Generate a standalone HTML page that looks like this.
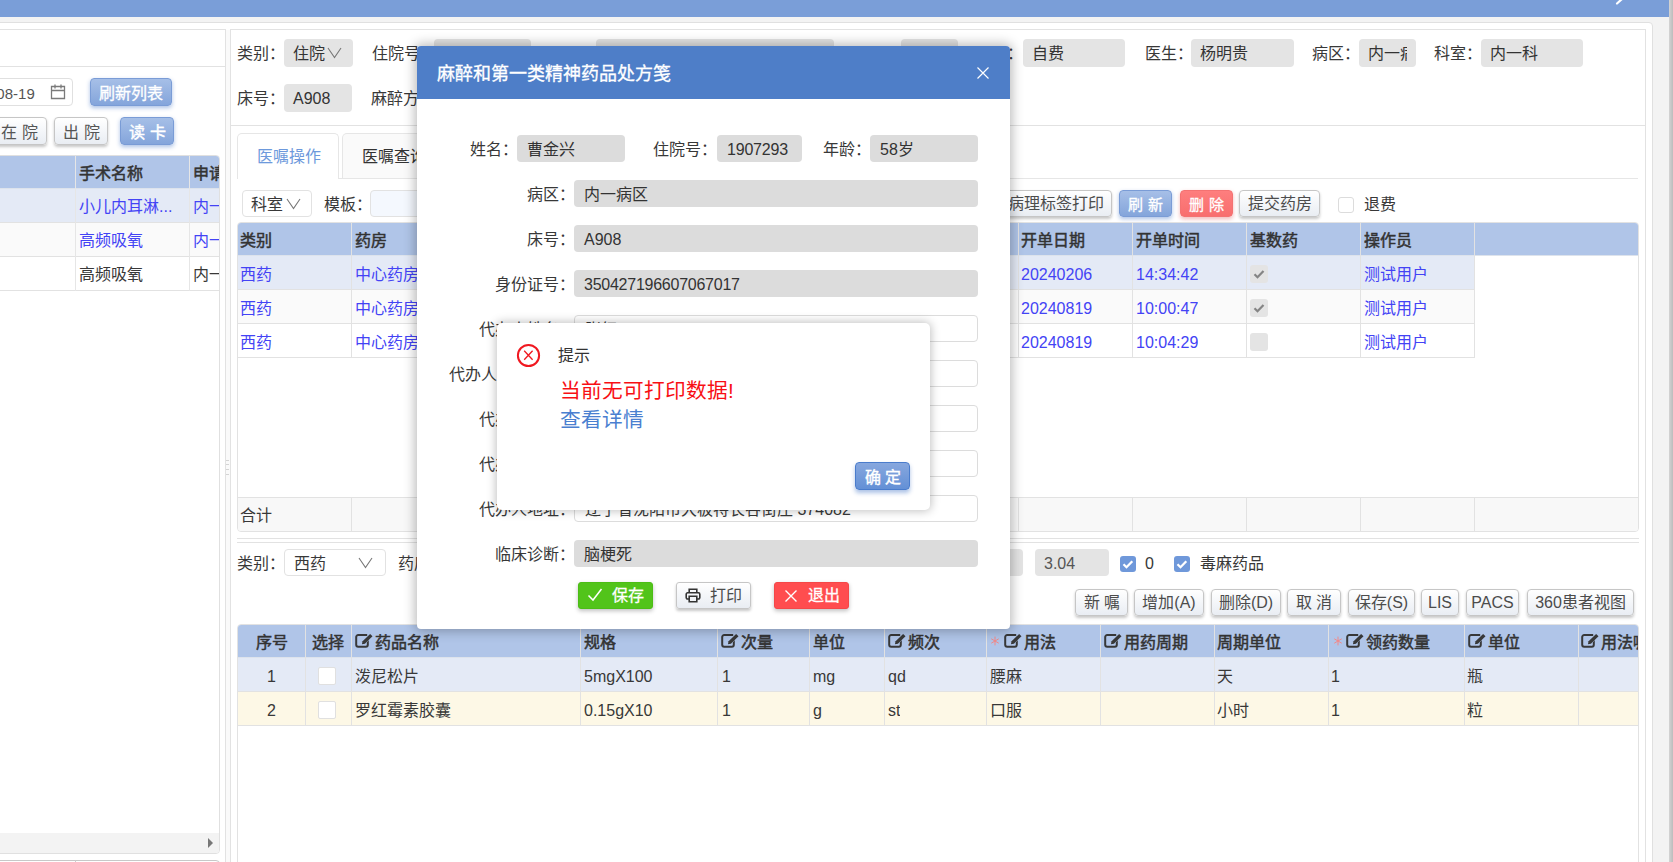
<!DOCTYPE html>
<html lang="zh-CN">
<head>
<meta charset="utf-8">
<style>
*{box-sizing:border-box;margin:0;padding:0}
html,body{width:1673px;height:862px;overflow:hidden;background:#f3f3f3;font-family:"Liberation Sans",sans-serif;font-size:16px;color:#383838}
.a{position:absolute}
.t{position:absolute;white-space:nowrap;line-height:1}
.gb{position:absolute;background:#e4e4e4;border-radius:4px;white-space:nowrap;overflow:hidden;padding-left:9px;color:#333}
.wb{position:absolute;background:#fff;border:1px solid #dcdcdc;border-radius:4px;white-space:nowrap;overflow:hidden}
.btn{position:absolute;border:1px solid #c6c6c6;border-radius:4px;background:linear-gradient(#fff,#e9edf3);box-shadow:0 2px 3px rgba(0,0,0,.22);text-align:center;white-space:nowrap;color:#4c4c4c;font-size:15px}
.bb{position:absolute;border:1px solid #7a9cd6;border-radius:4px;background:linear-gradient(#a6bfe7,#84a5db);box-shadow:0 2px 4px rgba(70,120,200,.45);text-align:center;white-space:nowrap;color:#fff;font-size:15px;padding-top:1px;-webkit-text-stroke:0.3px #fff}
.br{position:absolute;border:1px solid #f47272;border-radius:4px;background:linear-gradient(#fe7e7e,#f86e6e);box-shadow:0 2px 4px rgba(220,80,80,.4);text-align:center;white-space:nowrap;color:#fff;font-size:15px;padding-top:1px;-webkit-text-stroke:0.3px #fff}
.hl{position:absolute;height:1px;background:#e2e2e2}
.vl{position:absolute;width:1px;background:#e2e2e2}
.th{position:absolute;background:#b0c5e8}
.hd{position:absolute;white-space:nowrap;-webkit-text-stroke:0.5px #333;color:#333;overflow:hidden;padding-top:1px}
.cell{position:absolute;white-space:nowrap;overflow:hidden;padding-top:2px}
.lk{color:#4343f5}
</style>
</head>
<body>
<!-- top bar -->
<div class="a" style="left:0;top:0;width:1669px;height:17px;background:#7a9ed8"></div>
<svg class="a" style="left:1614px;top:-3px" width="10" height="8" viewBox="0 0 10 8"><path d="M3 6.5L7.5 2.5" stroke="#fff" stroke-width="2.2" stroke-linecap="round"/></svg>
<div class="a" style="left:1669px;top:0;width:4px;height:862px;background:linear-gradient(90deg,#d4d4d4,#bcbcbc)"></div>

<!-- outer panel -->
<div class="a" style="left:-10px;top:22px;width:1663px;height:900px;background:#fff;border:1px solid #e0e0e0;border-radius:4px"></div>

<!-- LEFT PANEL -->
<div class="a" style="left:-10px;top:29px;width:236px;height:900px;border:1px solid #e2e2e2;background:#fff"></div>
<div class="hl" style="left:0;top:66px;width:225px"></div>
<div class="wb" style="left:-40px;top:78px;width:113px;height:28px;border-color:#e0e0e0"></div>
<div class="t" style="left:-42px;top:86px;color:#555;font-size:15px">2024-08-19</div>
<svg class="a" style="left:50px;top:83px" width="16" height="17" viewBox="0 0 16 17"><path d="M1.5 3.5h13v12h-13zM1.5 7.5h13M5 1.5v4M11 1.5v4" fill="none" stroke="#7a7a7a" stroke-width="1.3"/></svg>
<div class="bb" style="left:90px;top:78px;width:82px;height:28px;line-height:28px;font-size:16px">刷新列表</div>
<div class="btn" style="left:-8px;top:117px;width:55px;height:28px;line-height:27px;padding-top:1px;font-size:16px;letter-spacing:5px;padding-left:5px;color:#555">在院</div>
<div class="btn" style="left:54px;top:117px;width:54px;height:28px;line-height:27px;padding-top:1px;font-size:16px;letter-spacing:5px;padding-left:5px;color:#555">出院</div>
<div class="bb" style="left:120px;top:117px;width:54px;height:28px;line-height:27px;font-size:16px;letter-spacing:5px;padding-left:5px;-webkit-text-stroke:0.45px #fff">读卡</div>

<!-- left table -->
<div class="a" style="left:-10px;top:155px;width:230px;height:699px;border:1px solid #e0e0e0;border-radius:0 4px 4px 0;overflow:hidden;background:#fff">
  <div class="th" style="left:0;top:0;width:230px;height:33px;border-bottom:1px solid #dde3ec"></div>
  <div class="a" style="left:0;top:33px;width:230px;height:34px;background:#e4eaf6;border-bottom:1px solid #e2e2e2"></div>
  <div class="a" style="left:0;top:67px;width:230px;height:34px;background:#fafafa;border-bottom:1px solid #e2e2e2"></div>
  <div class="a" style="left:0;top:101px;width:230px;height:34px;background:#fff;border-bottom:1px solid #e2e2e2"></div>
  <div class="vl" style="left:84px;top:0;height:135px;background:#e6e6e6"></div>
  <div class="vl" style="left:198px;top:0;height:135px;background:#e6e6e6"></div>
  <div class="hd" style="left:88px;top:0;line-height:33px">手术名称</div>
  <div class="hd" style="left:202px;top:0;line-height:33px">申请</div>
  <div class="cell lk" style="padding-top:1px;left:88px;top:33px;line-height:34px">小儿内耳淋...</div>
  <div class="cell lk" style="padding-top:1px;left:202px;top:33px;line-height:34px">内一</div>
  <div class="cell lk" style="padding-top:1px;left:88px;top:67px;line-height:34px">高频吸氧</div>
  <div class="cell lk" style="padding-top:1px;left:202px;top:67px;line-height:34px">内一</div>
  <div class="cell" style="padding-top:1px;left:88px;top:101px;line-height:34px">高频吸氧</div>
  <div class="cell" style="padding-top:1px;left:202px;top:101px;line-height:34px">内一</div>
  <div class="a" style="left:0;top:677px;width:230px;height:20px;background:#f3f3f3"></div>
  <svg class="a" style="left:216px;top:682px" width="8" height="10" viewBox="0 0 8 10"><path d="M1 0L6 5L1 10z" fill="#777"/></svg>
</div>
<div class="a" style="left:-10px;top:860px;width:230px;height:20px;border:1px solid #c8c8c8;border-radius:0 4px 0 0"></div>
<div class="vl" style="left:75px;top:860px;height:4px;background:#ccc"></div>

<!-- splitter -->
<div class="a" style="left:226px;top:30px;width:4px;height:840px;background:#fafafa"></div>
<div class="a" style="left:226px;top:460px;width:3px;height:1px;background:#d4d4d4"></div>
<div class="a" style="left:226px;top:464px;width:3px;height:1px;background:#d4d4d4"></div>
<div class="a" style="left:226px;top:469px;width:3px;height:1px;background:#d4d4d4"></div>
<div class="a" style="left:226px;top:474px;width:3px;height:1px;background:#d4d4d4"></div>

<!-- RIGHT PANEL -->
<div class="a" style="left:230px;top:29px;width:1416px;height:900px;border:1px solid #e2e2e2;background:#fff"></div>
<!-- form row1 -->
<div class="t" style="left:237px;top:39px;line-height:28px;padding-top:1px">类别：</div>
<div class="gb" style="left:284px;top:39px;width:69px;height:28px;line-height:28px;padding-left:9px;padding-top:1px">住院<svg style="position:absolute;left:43px;top:8px" width="15" height="12" viewBox="0 0 15 12"><path d="M1 1l6.5 9.5L14 1" fill="none" stroke="#777" stroke-width="1.1"/></svg></div>
<div class="t" style="left:372px;top:39px;line-height:28px;padding-top:1px">住院号：</div>
<div class="gb" style="left:434px;top:39px;width:97px;height:28px"></div>
<div class="gb" style="left:596px;top:39px;width:238px;height:28px"></div>
<div class="gb" style="left:901px;top:39px;width:57px;height:28px"></div>
<div class="t" style="left:1007px;top:39px;line-height:28px;padding-top:1px">：</div>
<div class="gb" style="left:1023px;top:39px;width:102px;height:28px;line-height:28px;padding-top:1px">自费</div>
<div class="t" style="left:1145px;top:39px;line-height:28px;padding-top:1px">医生：</div>
<div class="gb" style="left:1191px;top:39px;width:103px;height:28px;line-height:28px;padding-top:1px">杨明贵</div>
<div class="t" style="left:1312px;top:39px;line-height:28px;padding-top:1px">病区：</div>
<div class="gb" style="left:1359px;top:39px;width:57px;height:28px;line-height:28px;padding-top:1px;padding-right:4px"><div style="width:39px;overflow:hidden">内一病区</div></div>
<div class="t" style="left:1434px;top:39px;line-height:28px;padding-top:1px">科室：</div>
<div class="gb" style="left:1481px;top:39px;width:102px;height:28px;line-height:28px;padding-top:1px">内一科</div>
<!-- form row2 -->
<div class="t" style="left:237px;top:84px;line-height:28px;padding-top:1px">床号：</div>
<div class="gb" style="left:284px;top:84px;width:68px;height:28px;line-height:28px;padding-top:1px">A908</div>
<div class="t" style="left:371px;top:84px;line-height:28px;padding-top:1px">麻醉方式：</div>
<div class="hl" style="left:231px;top:125px;width:1414px"></div>

<!-- tabs -->
<div class="a" style="left:237px;top:133px;width:102px;height:46px;border:1px solid #e6e6e6;border-bottom:0;border-radius:5px 5px 0 0;background:#fff"></div>
<div class="t" style="left:257px;top:133px;line-height:46px;padding-top:1px;color:#6d99dc">医嘱操作</div>
<div class="a" style="left:342px;top:133px;width:102px;height:46px;border:1px solid #e6e6e6;border-bottom:0;border-radius:5px 5px 0 0;background:#fafafa"></div>
<div class="t" style="left:362px;top:133px;line-height:46px;padding-top:1px;color:#333">医嘱查询</div>
<div class="hl" style="left:338px;top:178px;width:1300px;background:#e6e6e6"></div>

<!-- toolbar -->
<div class="wb" style="left:242px;top:190px;width:70px;height:27px;border-color:#e2e2e2"></div>
<div class="t" style="left:251px;top:190px;line-height:27px;padding-top:1px">科室</div>
<svg class="a" style="left:286px;top:198px" width="15" height="12" viewBox="0 0 15 12"><path d="M1 1l6.5 9.5L14 1" fill="none" stroke="#777" stroke-width="1.1"/></svg>
<div class="t" style="left:324px;top:190px;line-height:27px;padding-top:1px">模板：</div>
<div class="wb" style="left:370px;top:190px;width:200px;height:27px;background:#f4f8fe;border-color:#e2e2e2"></div>
<div class="btn" style="left:1000px;top:190px;width:112px;height:27px;line-height:26px;font-size:16px">病理标签打印</div>
<div class="bb" style="left:1119px;top:190px;width:53px;height:27px;line-height:26px;font-size:15px;letter-spacing:5px;padding-left:5px">刷新</div>
<div class="br" style="left:1180px;top:190px;width:53px;height:27px;line-height:26px;font-size:15px;letter-spacing:5px;padding-left:5px">删除</div>
<div class="btn" style="left:1239px;top:190px;width:81px;height:27px;line-height:26px;font-size:16px">提交药房</div>
<div class="a" style="left:1338px;top:197px;width:16px;height:16px;border:1px solid #dcdcdc;border-radius:3px;background:#fff"></div>
<div class="t" style="left:1364px;top:190px;line-height:27px;padding-top:1px">退费</div>

<!-- main table -->
<div class="a" style="left:237px;top:222px;width:1402px;height:310px;border:1px solid #e2e2e2;border-radius:4px;overflow:hidden;background:#fff" id="mt">
  <div class="th" style="left:0;top:0;width:1402px;height:33px;border-bottom:1px solid #dde3ec"></div>
  <div class="a" style="left:0;top:33px;width:1237px;height:34px;background:#e4eaf6;border-bottom:1px solid #e2e2e2"></div>
  <div class="a" style="left:0;top:67px;width:1237px;height:34px;background:#fafafa;border-bottom:1px solid #e2e2e2"></div>
  <div class="a" style="left:0;top:101px;width:1237px;height:34px;background:#fff;border-bottom:1px solid #e2e2e2"></div>
  <div class="a" style="left:0;top:274px;width:1402px;height:35px;background:#f8f8f8;border-top:1px solid #e2e2e2"></div>
  <div class="vl" style="left:113px;top:0;height:135px"></div>
  <div class="vl" style="left:113px;top:274px;height:35px"></div>
  <div class="vl" style="left:780px;top:0;height:135px"></div><div class="vl" style="left:780px;top:274px;height:35px"></div>
  <div class="vl" style="left:894px;top:0;height:135px"></div><div class="vl" style="left:894px;top:274px;height:35px"></div>
  <div class="vl" style="left:1008px;top:0;height:135px"></div><div class="vl" style="left:1008px;top:274px;height:35px"></div>
  <div class="vl" style="left:1122px;top:0;height:135px"></div><div class="vl" style="left:1122px;top:274px;height:35px"></div>
  <div class="vl" style="left:1236px;top:0;height:135px"></div><div class="vl" style="left:1236px;top:274px;height:35px"></div>
  <div class="hd" style="left:2px;top:0;line-height:33px">类别</div>
  <div class="hd" style="left:117px;top:0;line-height:33px">药房</div>
  <div class="hd" style="left:783px;top:0;line-height:33px">开单日期</div>
  <div class="hd" style="left:898px;top:0;line-height:33px">开单时间</div>
  <div class="hd" style="left:1012px;top:0;line-height:33px">基数药</div>
  <div class="hd" style="left:1126px;top:0;line-height:33px">操作员</div>
  <div class="cell lk" style="left:2px;top:33px;line-height:34px">西药</div>
  <div class="cell lk" style="left:117px;top:33px;line-height:34px">中心药房</div>
  <div class="cell lk" style="left:783px;top:33px;line-height:34px">20240206</div>
  <div class="cell lk" style="left:898px;top:33px;line-height:34px">14:34:42</div>
  <div class="cell lk" style="left:1126px;top:33px;line-height:34px">测试用户</div>
  <div class="cell lk" style="left:2px;top:67px;line-height:34px">西药</div>
  <div class="cell lk" style="left:117px;top:67px;line-height:34px">中心药房</div>
  <div class="cell lk" style="left:783px;top:67px;line-height:34px">20240819</div>
  <div class="cell lk" style="left:898px;top:67px;line-height:34px">10:00:47</div>
  <div class="cell lk" style="left:1126px;top:67px;line-height:34px">测试用户</div>
  <div class="cell lk" style="left:2px;top:101px;line-height:34px">西药</div>
  <div class="cell lk" style="left:117px;top:101px;line-height:34px">中心药房</div>
  <div class="cell lk" style="left:783px;top:101px;line-height:34px">20240819</div>
  <div class="cell lk" style="left:898px;top:101px;line-height:34px">10:04:29</div>
  <div class="cell lk" style="left:1126px;top:101px;line-height:34px">测试用户</div>
  <div class="a" style="left:1012px;top:42px;width:18px;height:18px;background:#e4e4e4;border-radius:3px"><svg width="18" height="18" viewBox="0 0 18 18"><path d="M4.5 9.3l3 3 6-6.3" fill="none" stroke="#858585" stroke-width="2.2"/></svg></div>
  <div class="a" style="left:1012px;top:76px;width:18px;height:18px;background:#e4e4e4;border-radius:3px"><svg width="18" height="18" viewBox="0 0 18 18"><path d="M4.5 9.3l3 3 6-6.3" fill="none" stroke="#858585" stroke-width="2.2"/></svg></div>
  <div class="a" style="left:1012px;top:110px;width:18px;height:18px;background:#e4e4e4;border-radius:3px"></div>
  <div class="cell" style="left:2px;top:274px;line-height:34px">合计</div>
</div>

<!-- splitter horizontal -->
<div class="hl" style="left:237px;top:538px;width:1402px"></div>
<div class="hl" style="left:237px;top:542px;width:1402px"></div>

<!-- lower form -->
<div class="t" style="left:237px;top:549px;line-height:27px;padding-top:1px">类别：</div>
<div class="wb" style="left:284px;top:549px;width:102px;height:27px;border-color:#e2e2e2;line-height:25px;padding-left:9px;padding-top:1px">西药</div>
<svg class="a" style="left:358px;top:557px" width="15" height="12" viewBox="0 0 15 12"><path d="M1 1l6.5 9.5L14 1" fill="none" stroke="#777" stroke-width="1.1"/></svg>
<div class="t" style="left:398px;top:549px;line-height:27px;padding-top:1px">药房：</div>
<div class="gb" style="left:940px;top:549px;width:83px;height:27px"></div>
<div class="gb" style="left:1035px;top:549px;width:74px;height:27px;line-height:27px;padding-top:1px;color:#555">3.04</div>
<div class="a" style="left:1120px;top:556px;width:16px;height:16px;background:#6f98da;border-radius:3px"><svg width="16" height="16" viewBox="0 0 16 16"><path d="M3.5 8.2l3 3 5.8-6" fill="none" stroke="#fff" stroke-width="2.3"/></svg></div>
<div class="t" style="left:1145px;top:549px;line-height:27px;padding-top:1px">0</div>
<div class="a" style="left:1174px;top:556px;width:16px;height:16px;background:#6f98da;border-radius:3px"><svg width="16" height="16" viewBox="0 0 16 16"><path d="M3.5 8.2l3 3 5.8-6" fill="none" stroke="#fff" stroke-width="2.3"/></svg></div>
<div class="t" style="left:1200px;top:549px;line-height:27px;padding-top:1px">毒麻药品</div>

<!-- lower buttons -->
<div class="btn" style="left:1075px;top:589px;width:53px;height:27px;line-height:26px;font-size:16px;letter-spacing:4px;padding-left:4px">新嘱</div>
<div class="btn" style="left:1134px;top:589px;width:70px;height:27px;line-height:26px;font-size:16px">增加(A)</div>
<div class="btn" style="left:1211px;top:589px;width:70px;height:27px;line-height:26px;font-size:16px">删除(D)</div>
<div class="btn" style="left:1287px;top:589px;width:54px;height:27px;line-height:26px;font-size:16px;letter-spacing:4px;padding-left:4px">取消</div>
<div class="btn" style="left:1348px;top:589px;width:67px;height:27px;line-height:26px;font-size:16px">保存(S)</div>
<div class="btn" style="left:1421px;top:589px;width:38px;height:27px;line-height:26px;font-size:16px">LIS</div>
<div class="btn" style="left:1466px;top:589px;width:53px;height:27px;line-height:26px;font-size:16px">PACS</div>
<div class="btn" style="left:1527px;top:589px;width:107px;height:27px;line-height:26px;font-size:16px">360患者视图</div>

<!-- lower table -->
<div class="a" style="left:237px;top:624px;width:1402px;height:260px;border:1px solid #e2e2e2;border-radius:4px 4px 0 0;overflow:hidden;background:#fff">
  <div class="th" style="left:0;top:0;width:1402px;height:33px;border-bottom:1px solid #dde3ec"></div>
  <div class="a" style="left:0;top:33px;width:1402px;height:34px;background:#e4eaf6;border-bottom:1px solid #e2e2e2"></div>
  <div class="a" style="left:0;top:67px;width:1402px;height:34px;background:#fdf8e6;border-bottom:1px solid #e2e2e2"></div>
  <div class="vl" style="left:67px;top:0;height:101px"></div>
  <div class="vl" style="left:113px;top:0;height:101px"></div>
  <div class="vl" style="left:342px;top:0;height:101px"></div>
  <div class="vl" style="left:479px;top:0;height:101px"></div>
  <div class="vl" style="left:571px;top:0;height:101px"></div>
  <div class="vl" style="left:646px;top:0;height:101px"></div>
  <div class="vl" style="left:748px;top:0;height:101px"></div>
  <div class="vl" style="left:862px;top:0;height:101px"></div>
  <div class="vl" style="left:976px;top:0;height:101px"></div>
  <div class="vl" style="left:1090px;top:0;height:101px"></div>
  <div class="vl" style="left:1226px;top:0;height:101px"></div>
  <div class="vl" style="left:1340px;top:0;height:101px"></div>
  <div class="hd" style="left:0px;top:0;width:67px;text-align:center;line-height:33px">序号</div>
  <div class="hd" style="left:67px;top:0;width:46px;text-align:center;line-height:33px">选择</div>
  <svg class="a" style="left:117px;top:8px" width="18" height="16" viewBox="0 0 18 16"><path d="M12.2 2.1H3.2a2 2 0 0 0-2 2v7.6a2 2 0 0 0 2 2h7.6a2 2 0 0 0 2-2V6.8" fill="none" stroke="#383838" stroke-width="2"/><path d="M6.9 11.3L7.56 8.19L15.12 0.88L17.48 3.32L9.92 10.63z" fill="#383838" stroke="#b0c5e8" stroke-width="0.9" paint-order="stroke"/></svg>
  <div class="hd" style="left:137px;top:0;line-height:33px">药品名称</div>
  <div class="hd" style="left:346px;top:0;line-height:33px">规格</div>
  <svg class="a" style="left:483px;top:8px" width="18" height="16" viewBox="0 0 18 16"><path d="M12.2 2.1H3.2a2 2 0 0 0-2 2v7.6a2 2 0 0 0 2 2h7.6a2 2 0 0 0 2-2V6.8" fill="none" stroke="#383838" stroke-width="2"/><path d="M6.9 11.3L7.56 8.19L15.12 0.88L17.48 3.32L9.92 10.63z" fill="#383838" stroke="#b0c5e8" stroke-width="0.9" paint-order="stroke"/></svg>
  <div class="hd" style="left:503px;top:0;line-height:33px">次量</div>
  <div class="hd" style="left:575px;top:0;line-height:33px">单位</div>
  <svg class="a" style="left:650px;top:8px" width="18" height="16" viewBox="0 0 18 16"><path d="M12.2 2.1H3.2a2 2 0 0 0-2 2v7.6a2 2 0 0 0 2 2h7.6a2 2 0 0 0 2-2V6.8" fill="none" stroke="#383838" stroke-width="2"/><path d="M6.9 11.3L7.56 8.19L15.12 0.88L17.48 3.32L9.92 10.63z" fill="#383838" stroke="#b0c5e8" stroke-width="0.9" paint-order="stroke"/></svg>
  <div class="hd" style="left:670px;top:0;line-height:33px">频次</div>
  <svg class="a" style="left:752px;top:11px" width="10" height="10" viewBox="0 0 10 10"><path d="M5 1v8M1.6 3l6.8 4M1.6 7l6.8-4" stroke="#f28888" stroke-width="1" stroke-linecap="round"/></svg>
  <svg class="a" style="left:766px;top:8px" width="18" height="16" viewBox="0 0 18 16"><path d="M12.2 2.1H3.2a2 2 0 0 0-2 2v7.6a2 2 0 0 0 2 2h7.6a2 2 0 0 0 2-2V6.8" fill="none" stroke="#383838" stroke-width="2"/><path d="M6.9 11.3L7.56 8.19L15.12 0.88L17.48 3.32L9.92 10.63z" fill="#383838" stroke="#b0c5e8" stroke-width="0.9" paint-order="stroke"/></svg>
  <div class="hd" style="left:786px;top:0;line-height:33px">用法</div>
  <svg class="a" style="left:866px;top:8px" width="18" height="16" viewBox="0 0 18 16"><path d="M12.2 2.1H3.2a2 2 0 0 0-2 2v7.6a2 2 0 0 0 2 2h7.6a2 2 0 0 0 2-2V6.8" fill="none" stroke="#383838" stroke-width="2"/><path d="M6.9 11.3L7.56 8.19L15.12 0.88L17.48 3.32L9.92 10.63z" fill="#383838" stroke="#b0c5e8" stroke-width="0.9" paint-order="stroke"/></svg>
  <div class="hd" style="left:886px;top:0;line-height:33px">用药周期</div>
  <div class="hd" style="left:979px;top:0;line-height:33px">周期单位</div>
  <svg class="a" style="left:1095px;top:11px" width="10" height="10" viewBox="0 0 10 10"><path d="M5 1v8M1.6 3l6.8 4M1.6 7l6.8-4" stroke="#f28888" stroke-width="1" stroke-linecap="round"/></svg>
  <svg class="a" style="left:1108px;top:8px" width="18" height="16" viewBox="0 0 18 16"><path d="M12.2 2.1H3.2a2 2 0 0 0-2 2v7.6a2 2 0 0 0 2 2h7.6a2 2 0 0 0 2-2V6.8" fill="none" stroke="#383838" stroke-width="2"/><path d="M6.9 11.3L7.56 8.19L15.12 0.88L17.48 3.32L9.92 10.63z" fill="#383838" stroke="#b0c5e8" stroke-width="0.9" paint-order="stroke"/></svg>
  <div class="hd" style="left:1128px;top:0;line-height:33px">领药数量</div>
  <svg class="a" style="left:1230px;top:8px" width="18" height="16" viewBox="0 0 18 16"><path d="M12.2 2.1H3.2a2 2 0 0 0-2 2v7.6a2 2 0 0 0 2 2h7.6a2 2 0 0 0 2-2V6.8" fill="none" stroke="#383838" stroke-width="2"/><path d="M6.9 11.3L7.56 8.19L15.12 0.88L17.48 3.32L9.92 10.63z" fill="#383838" stroke="#b0c5e8" stroke-width="0.9" paint-order="stroke"/></svg>
  <div class="hd" style="left:1250px;top:0;line-height:33px">单位</div>
  <svg class="a" style="left:1343px;top:8px" width="18" height="16" viewBox="0 0 18 16"><path d="M12.2 2.1H3.2a2 2 0 0 0-2 2v7.6a2 2 0 0 0 2 2h7.6a2 2 0 0 0 2-2V6.8" fill="none" stroke="#383838" stroke-width="2"/><path d="M6.9 11.3L7.56 8.19L15.12 0.88L17.48 3.32L9.92 10.63z" fill="#383838" stroke="#b0c5e8" stroke-width="0.9" paint-order="stroke"/></svg>
  <div class="hd" style="left:1363px;top:0;line-height:33px">用法嘱托</div>
  <div class="cell" style="left:0px;top:33px;width:67px;text-align:center;line-height:34px">1</div>
  <div class="a" style="left:80px;top:42px;width:18px;height:18px;background:#fff;border:1px solid #e0e0e0;border-radius:2px"></div>
  <div class="cell" style="left:117px;top:33px;line-height:34px">泼尼松片</div>
  <div class="cell" style="left:346px;top:33px;line-height:34px">5mgX100</div>
  <div class="cell" style="left:484px;top:33px;line-height:34px">1</div>
  <div class="cell" style="left:575px;top:33px;line-height:34px">mg</div>
  <div class="cell" style="left:650px;top:33px;line-height:34px">qd</div>
  <div class="cell" style="left:752px;top:33px;line-height:34px">腰麻</div>
  <div class="cell" style="left:979px;top:33px;line-height:34px">天</div>
  <div class="cell" style="left:1093px;top:33px;line-height:34px">1</div>
  <div class="cell" style="left:1229px;top:33px;line-height:34px">瓶</div>
  <div class="cell" style="left:0px;top:67px;width:67px;text-align:center;line-height:34px">2</div>
  <div class="a" style="left:80px;top:76px;width:18px;height:18px;background:#fff;border:1px solid #e0e0e0;border-radius:2px"></div>
  <div class="cell" style="left:117px;top:67px;line-height:34px">罗红霉素胶囊</div>
  <div class="cell" style="left:346px;top:67px;line-height:34px">0.15gX10</div>
  <div class="cell" style="left:484px;top:67px;line-height:34px">1</div>
  <div class="cell" style="left:575px;top:67px;line-height:34px">g</div>
  <div class="cell" style="left:650px;top:67px;line-height:34px">st</div>
  <div class="cell" style="left:752px;top:67px;line-height:34px">口服</div>
  <div class="cell" style="left:979px;top:67px;line-height:34px">小时</div>
  <div class="cell" style="left:1093px;top:67px;line-height:34px">1</div>
  <div class="cell" style="left:1229px;top:67px;line-height:34px">粒</div>
</div>

<!-- DIALOG -->
<div class="a" style="left:417px;top:46px;width:593px;height:583px;background:#fff;border-radius:4px;box-shadow:0 0 12px 2px rgba(0,0,0,.28)">
  <div class="a" style="left:0;top:0;width:593px;height:53px;background:#4e7ec8;border-radius:4px 4px 0 0"></div>
  <div class="t" style="left:20px;top:1px;line-height:53px;font-size:18px;color:#fff;padding-top:1px;-webkit-text-stroke:0.3px #fff">麻醉和第一类精神药品处方笺</div>
  <svg class="a" style="left:560px;top:21px" width="12" height="12" viewBox="0 0 12 12"><path d="M0.5 0.5L11.5 11.5M11.5 0.5L0.5 11.5" stroke="#fff" stroke-width="1.15"/></svg>
</div>
<div class="t" style="left:470px;top:135px;line-height:27px;padding-top:1px">姓名：</div>
<div class="gb" style="padding-left:10px;left:517px;top:135px;width:108px;height:27px;line-height:27px;padding-top:1px;background:#dcdcdc">曹金兴</div>
<div class="t" style="left:653px;top:135px;line-height:27px;padding-top:1px">住院号：</div>
<div class="gb" style="padding-left:10px;left:717px;top:135px;width:85px;height:27px;line-height:27px;padding-top:1px;background:#dcdcdc;letter-spacing:-0.2px">1907293</div>
<div class="t" style="left:823px;top:135px;line-height:27px;padding-top:1px">年龄：</div>
<div class="gb" style="padding-left:10px;left:870px;top:135px;width:108px;height:27px;line-height:27px;padding-top:1px;background:#dcdcdc">58岁</div>

<div class="t" style="left:375px;width:200px;text-align:right;top:180px;line-height:27px;padding-top:1px">病区：</div>
<div class="gb" style="padding-left:10px;left:574px;top:180px;width:404px;height:27px;line-height:27px;padding-top:1px;background:#dcdcdc">内一病区</div>
<div class="t" style="left:375px;width:200px;text-align:right;top:225px;line-height:27px;padding-top:1px">床号：</div>
<div class="gb" style="padding-left:10px;left:574px;top:225px;width:404px;height:27px;line-height:27px;padding-top:1px;background:#dcdcdc">A908</div>
<div class="t" style="left:375px;width:200px;text-align:right;top:270px;line-height:27px;padding-top:1px">身份证号：</div>
<div class="gb" style="padding-left:10px;left:574px;top:270px;width:404px;height:27px;line-height:27px;padding-top:1px;background:#dcdcdc;letter-spacing:-0.25px">350427196607067017</div>
<div class="t" style="left:375px;width:200px;text-align:right;top:315px;line-height:27px;padding-top:1px">代办人姓名：</div>
<div class="wb" style="left:574px;top:315px;width:404px;height:27px;line-height:25px;padding-left:10px;padding-top:1px">张红</div>
<div class="t" style="left:376.5px;width:200px;text-align:right;top:360px;line-height:27px;padding-top:1px">代办人身份证号：</div>
<div class="wb" style="left:574px;top:360px;width:404px;height:27px"></div>
<div class="t" style="left:375px;width:200px;text-align:right;top:405px;line-height:27px;padding-top:1px">代办人电话：</div>
<div class="wb" style="left:574px;top:405px;width:404px;height:27px"></div>
<div class="t" style="left:375px;width:200px;text-align:right;top:450px;line-height:27px;padding-top:1px">代办人性别：</div>
<div class="wb" style="left:574px;top:450px;width:404px;height:27px"></div>
<div class="t" style="left:375px;width:200px;text-align:right;top:495px;line-height:27px;padding-top:1px">代办人地址：</div>
<div class="wb" style="left:574px;top:495px;width:404px;height:27px;line-height:25px;padding-left:10px;padding-top:1px">辽宁省沈阳市大板特长谷街庄 374082</div>
<div class="t" style="left:375px;width:200px;text-align:right;top:540px;line-height:27px;padding-top:1px">临床诊断：</div>
<div class="gb" style="padding-left:10px;left:574px;top:540px;width:404px;height:27px;line-height:27px;padding-top:1px;background:#dcdcdc">脑梗死</div>

<div class="a" style="left:578px;top:582px;width:75px;height:27px;background:#52c41a;border:1px solid #4cbd16;border-radius:3px;box-shadow:0 2px 4px rgba(0,0,0,.25);color:#fff;font-size:16px;line-height:25px;padding-top:1px;white-space:nowrap">
  <svg class="a" style="left:8px;top:5px" width="16" height="14" viewBox="0 0 16 14"><path d="M1.5 7.5l4.5 4.5 8.5-11" fill="none" stroke="#fff" stroke-width="1.5"/></svg>
  <span class="a" style="left:33px;top:0px;-webkit-text-stroke:0.3px #fff">保存</span></div>
<div class="btn" style="left:676px;top:582px;width:75px;height:27px;border-radius:3px;line-height:25px;padding-top:1px;font-size:16px">
  <svg class="a" style="left:8px;top:5px" width="16" height="15" viewBox="0 0 16 15"><path d="M4.2 4.8V1.2h7.6v3.6M4.2 11H2.6a1.4 1.4 0 0 1-1.4-1.4V6.2a1.4 1.4 0 0 1 1.4-1.4h10.8a1.4 1.4 0 0 1 1.4 1.4v3.4a1.4 1.4 0 0 1-1.4 1.4H11.8M4.2 8.3h7.6v5.5H4.2z" fill="none" stroke="#333" stroke-width="1.6"/></svg>
  <span class="a" style="left:33px;top:0px">打印</span></div>
<div class="a" style="left:774px;top:582px;width:75px;height:27px;background:#ff4d4f;border:1px solid #f54748;border-radius:3px;box-shadow:0 2px 4px rgba(0,0,0,.25);color:#fff;font-size:16px;line-height:25px;padding-top:1px;white-space:nowrap">
  <svg class="a" style="left:10px;top:7px" width="12" height="12" viewBox="0 0 12 12"><path d="M0.5 0.5L11.5 11.5M11.5 0.5L0.5 11.5" stroke="#fff" stroke-width="1.4"/></svg>
  <span class="a" style="left:33px;top:0px;-webkit-text-stroke:0.3px #fff">退出</span></div>

<!-- ALERT -->
<div class="a" style="left:497px;top:323px;width:433px;height:187px;background:#fff;border-radius:5px;box-shadow:0 0 10px 1px rgba(0,0,0,.25)">
  <svg class="a" style="left:19px;top:20px" width="25" height="25" viewBox="0 0 25 25"><circle cx="12.5" cy="12.5" r="10.6" fill="none" stroke="#f01820" stroke-width="2"/><path d="M8.2 7.8L16.6 16.8M16.6 7.8L8.2 16.8" stroke="#f01820" stroke-width="1.3"/></svg>
  <div class="t" style="left:61px;top:22px;line-height:22px;font-size:16px;color:#333">提示</div>
  <div class="t" style="left:63px;top:55px;line-height:26px;font-size:20.7px;color:#f80f14">当前无可打印数据!</div>
  <div class="t" style="left:63px;top:84px;line-height:26px;font-size:20.7px;color:#4a7fd0">查看详情</div>
  <div class="a" style="left:358px;top:139px;width:55px;height:28px;line-height:28px;font-size:16px;letter-spacing:4px;padding-left:4px;padding-top:1px;text-align:center;color:#fff;-webkit-text-stroke:0.4px #fff;border:1px solid #4a7ccc;border-radius:4px;background:linear-gradient(#87a7de,#6390d6);box-shadow:0 3px 4px rgba(70,120,200,.45)">确定</div>
</div>
</body>
</html>
